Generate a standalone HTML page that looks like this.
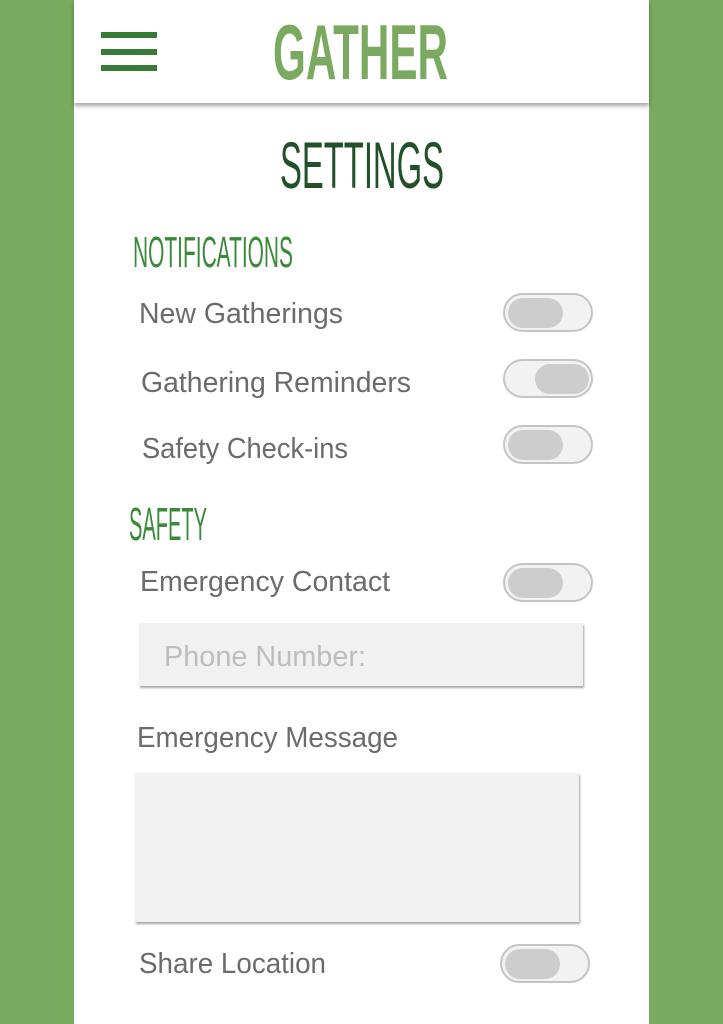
<!DOCTYPE html>
<html><head><meta charset="utf-8"><style>
html,body{margin:0;padding:0;width:723px;height:1024px;overflow:hidden;background:#79aa60}
.panel{position:absolute;left:74px;top:0;width:575px;height:1024px;background:#fff}
.hdr{position:absolute;left:74px;top:0;width:575px;height:103px;background:#fff;box-shadow:0 3px 4px rgba(0,0,0,.35)}
svg{position:absolute;left:0;top:0}
</style></head><body>
<div class="panel"></div>
<div class="hdr"></div>
<div style="position:absolute;left:139px;top:623px;width:444px;height:63px;background:#f1f1f1;box-shadow:1px 2px 2px rgba(0,0,0,.35)"></div>
<div style="position:absolute;left:135px;top:773px;width:444px;height:149px;background:#f1f1f1;box-shadow:1px 2px 2px rgba(0,0,0,.35)"></div>
<svg width="723" height="1024" font-family="Liberation Sans, sans-serif">
<g fill="#357d35">
<rect x="101" y="32" width="56" height="6"/><rect x="101" y="49" width="56" height="6"/><rect x="101" y="65" width="56" height="6"/>
</g>
<text x="273" y="79" font-size="78" font-weight="bold" fill="#79aa60" textLength="175" lengthAdjust="spacingAndGlyphs">GATHER</text>
<text x="280" y="188" font-size="66" fill="#22502a" textLength="164" lengthAdjust="spacingAndGlyphs">SETTINGS</text>
<text x="133" y="267" font-size="44" fill="#3a8a3a" textLength="160" lengthAdjust="spacingAndGlyphs">NOTIFICATIONS</text>
<text x="129" y="540" font-size="46" fill="#3a8a3a" textLength="78" lengthAdjust="spacingAndGlyphs">SAFETY</text>
<g font-size="29" fill="#6b6b6b">
<text x="139" y="323" textLength="204" lengthAdjust="spacingAndGlyphs">New Gatherings</text>
<text x="141" y="392" textLength="270" lengthAdjust="spacingAndGlyphs">Gathering Reminders</text>
<text x="142" y="458" textLength="206" lengthAdjust="spacingAndGlyphs">Safety Check-ins</text>
<text x="140" y="591" textLength="250" lengthAdjust="spacingAndGlyphs">Emergency Contact</text>
<text x="137" y="747" textLength="261" lengthAdjust="spacingAndGlyphs">Emergency Message</text>
<text x="139" y="973" textLength="187" lengthAdjust="spacingAndGlyphs">Share Location</text>
<text x="164" y="666" fill="#bdbdbd" textLength="202" lengthAdjust="spacingAndGlyphs">Phone Number:</text>
</g>
<g stroke="#c4c4c4" stroke-width="2" fill="#f2f2f2">
<rect x="504" y="294" width="88" height="37" rx="18.5"/>
<rect x="504" y="360" width="88" height="37" rx="18.5"/>
<rect x="504" y="426" width="88" height="37" rx="18.5"/>
<rect x="504" y="564" width="88" height="37" rx="18.5"/>
<rect x="501" y="945" width="88" height="37" rx="18.5"/>
</g>
<g fill="#cdcdcd">
<rect x="508" y="298" width="55" height="30" rx="15"/>
<rect x="535" y="364" width="54" height="30" rx="15"/>
<rect x="508" y="430" width="55" height="30" rx="15"/>
<rect x="508" y="568" width="55" height="30" rx="15"/>
<rect x="505" y="949" width="55" height="30" rx="15"/>
</g>
</svg>
</body></html>
